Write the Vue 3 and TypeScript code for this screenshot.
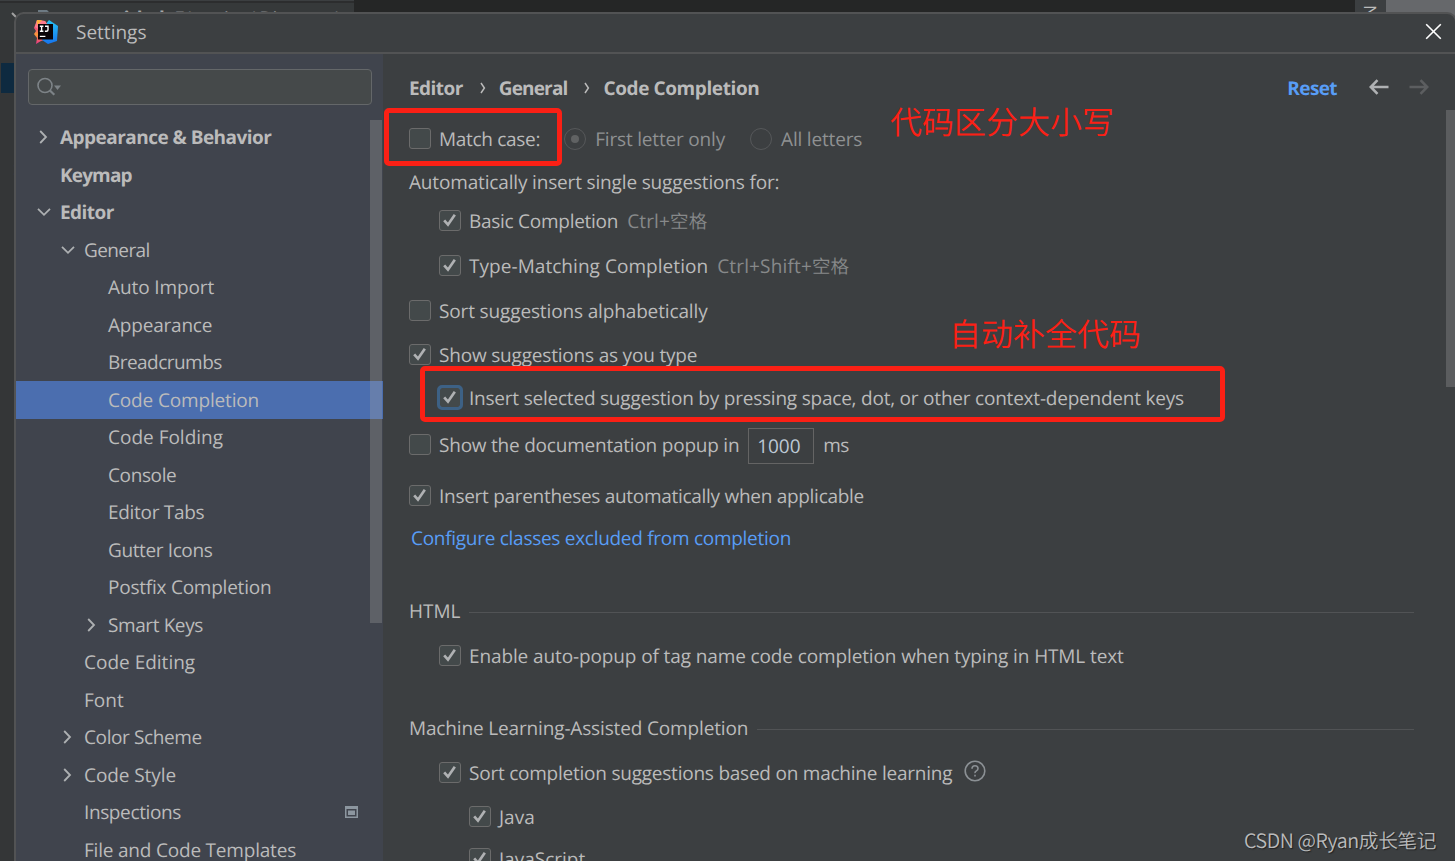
<script setup lang="ts">
interface TreeItem {
  label: string
  depth: number
  arrow?: 'open' | 'closed'
  bold?: boolean
  selected?: boolean
  badge?: boolean
}

interface OptionRow {
  kind: 'check' | 'text' | 'link' | 'section'
  label: string
  depth?: number
  checked?: boolean
  focused?: boolean
  hint?: string
  cjkHint?: string
  radios?: boolean
  delay?: string
  help?: boolean
}

const tree: TreeItem[] = [
  { label: 'Appearance & Behavior', depth: 0, arrow: 'closed', bold: true },
  { label: 'Keymap', depth: 0, bold: true },
  { label: 'Editor', depth: 0, arrow: 'open', bold: true },
  { label: 'General', depth: 1, arrow: 'open' },
  { label: 'Auto Import', depth: 2 },
  { label: 'Appearance', depth: 2 },
  { label: 'Breadcrumbs', depth: 2 },
  { label: 'Code Completion', depth: 2, selected: true },
  { label: 'Code Folding', depth: 2 },
  { label: 'Console', depth: 2 },
  { label: 'Editor Tabs', depth: 2 },
  { label: 'Gutter Icons', depth: 2 },
  { label: 'Postfix Completion', depth: 2 },
  { label: 'Smart Keys', depth: 2, arrow: 'closed' },
  { label: 'Code Editing', depth: 1 },
  { label: 'Font', depth: 1 },
  { label: 'Color Scheme', depth: 1, arrow: 'closed' },
  { label: 'Code Style', depth: 1, arrow: 'closed' },
  { label: 'Inspections', depth: 1, badge: true },
  { label: 'File and Code Templates', depth: 1 },
]

const rows: OptionRow[] = [
  { kind: 'check', label: 'Match case:', radios: true },
  { kind: 'text', label: 'Automatically insert single suggestions for:' },
  { kind: 'check', label: 'Basic Completion', depth: 1, checked: true, hint: 'Ctrl+', cjkHint: '空格' },
  { kind: 'check', label: 'Type-Matching Completion', depth: 1, checked: true, hint: 'Ctrl+Shift+', cjkHint: '空格' },
  { kind: 'check', label: 'Sort suggestions alphabetically' },
  { kind: 'check', label: 'Show suggestions as you type', checked: true },
  { kind: 'check', label: 'Insert selected suggestion by pressing space, dot, or other context-dependent keys', depth: 1, checked: true, focused: true },
  { kind: 'check', label: 'Show the documentation popup in', delay: '1000' },
  { kind: 'check', label: 'Insert parentheses automatically when applicable', checked: true },
  { kind: 'link', label: 'Configure classes excluded from completion' },
  { kind: 'section', label: 'HTML' },
  { kind: 'check', label: 'Enable auto-popup of tag name code completion when typing in HTML text', depth: 1, checked: true },
  { kind: 'section', label: 'Machine Learning-Assisted Completion' },
  { kind: 'check', label: 'Sort completion suggestions based on machine learning', depth: 1, checked: true, help: true },
  { kind: 'check', label: 'Java', depth: 2, checked: true },
  { kind: 'check', label: 'JavaScript', depth: 2, checked: true },
]
</script>

<template>
  <div class="desktop">
    <div class="ide">
      <div class="ide-project">
        <svg class="ide-arrow" width="14" height="12" viewBox="0 0 14 12"><path d="M1 2l6 6 6-6" fill="none" stroke="#a0a0a0" stroke-width="2" /></svg>
        <svg class="ide-folder" width="22" height="18" viewBox="0 0 22 18"><path d="M0 0h9l3 3h10v15H0z" fill="#6d7a83" /></svg>
        <b>untitled</b><span>E:\project\Directory\untitled</span>
      </div>
      <div class="ide-gap"></div>
      <div class="ide-tab">Notifications</div>
      <div class="ide-noise"></div>
    </div>
    <div class="ide-selection"></div>
    <div class="ide-mark">:</div>

    <div class="window">
      <header class="titlebar">
        <svg class="logo" width="26" height="26" viewBox="0 0 26 26">
          <defs>
            <linearGradient id="warm" x1="0" y1="0" x2="0" y2="1">
              <stop offset="0" stop-color="#ffa04f" /><stop offset=".35" stop-color="#f0507d" /><stop offset=".6" stop-color="#fc9a37" /><stop offset="1" stop-color="#e8318c" />
            </linearGradient>
            <linearGradient id="cool" x1="0" y1="0" x2="0" y2="1">
              <stop offset="0" stop-color="#26c3f5" /><stop offset="1" stop-color="#1674ee" />
            </linearGradient>
          </defs>
          <path d="M4 1l8 1 3 4v14l-7 2-5 3 1-6-3-4 2-3-2-3z" fill="url(#warm)" />
          <path d="M12 6l4-5 3 2 6 4-1 15-9 3-6-4z" fill="url(#cool)" />
          <path d="M4 1l8 1 2 3H5v5L2 8z" fill="#ff7b8d" />
          <path d="M4 1l5 .6L4 6z" fill="#ffb03a" />
          <rect x="5" y="5" width="15" height="15.5" fill="#0a0508" />
          <path d="M6.8 7.2h3.6M8.6 7.2v5M6.8 12.3h3.6M12 7.2h3v3.6q0 1.5-1.5 1.5h-1.6" fill="none" stroke="#fff" stroke-width="1.4" />
          <rect x="6.8" y="16.8" width="5.6" height="1.2" fill="#fff" />
        </svg>
        <span class="title">Settings</span>
        <svg class="close" width="17" height="17" viewBox="0 0 17 17"><path d="M1.2 1.2l14.6 14.6M15.8 1.2L1.2 15.8" stroke="#fff" stroke-width="1.6" /></svg>
      </header>

      <div class="body">
        <aside class="sidebar">
          <div class="search">
            <svg width="26" height="20" viewBox="0 0 26 20">
              <circle cx="8" cy="8.5" r="7" fill="none" stroke="#7d8387" stroke-width="1.6" />
              <path d="M12.7 13.2l4.6 4.6" stroke="#7d8387" stroke-width="2.2" />
              <path d="M17 8.5h7l-3.5 4.4z" fill="#7d8387" />
            </svg>
          </div>
          <div class="tree">
            <div
              v-for="item in tree"
              :key="item.label"
              class="node"
              :class="['depth-' + item.depth, { bold: item.bold, selected: item.selected }]"
            >
              <span class="arrow">
                <svg v-if="item.arrow === 'closed'" width="14" height="14" viewBox="0 0 14 14"><path d="M4.2 1L10 7l-5.8 6" /></svg>
                <svg v-if="item.arrow === 'open'" width="15" height="14" viewBox="0 0 15 14"><path d="M2 3.8l6 6 6-6" /></svg>
              </span>
              <span class="label">{{ item.label }}</span>
              <svg v-if="item.badge" class="badge" width="13" height="12" viewBox="0 0 13 12">
                <path d="M0 0h13v12H0zM1.5 3v7.5h10V3z" fill="#8c969f" fill-rule="evenodd" />
                <rect x="3" y="4.5" width="7" height="4.5" fill="#8c969f" />
              </svg>
            </div>
          </div>
          <div class="tree-thumb"></div>
        </aside>

        <main class="content">
          <div class="crumbs">
            <b class="c1">Editor</b>
            <svg width="6" height="12" viewBox="0 0 6 12"><path d="M1 1l3.4 5L1 11" /></svg>
            <b class="c2">General</b>
            <svg width="6" height="12" viewBox="0 0 6 12"><path d="M1 1l3.4 5L1 11" /></svg>
            <b class="c3">Code Completion</b>
            <b class="reset">Reset</b>
            <svg class="nav" width="20" height="16" viewBox="0 0 20 16"><path d="M19.5 8H2M8.5 1.2L1.8 8l6.7 6.8" /></svg>
            <svg class="nav forward" width="20" height="16" viewBox="0 0 20 16"><path d="M.5 8H18M11.5 1.2L18.2 8l-6.7 6.8" /></svg>
          </div>

          <div class="options">
            <div v-for="row in rows" :key="row.label" class="row" :class="[row.kind, 'indent-' + (row.depth ?? 0)]">
              <span v-if="row.kind === 'check'" class="box" :class="{ focused: row.focused }">
                <svg v-if="row.checked" width="19" height="19" viewBox="0 0 20 20"><path d="M4.4 9.8l4 4.6L15.6 4" /></svg>
              </span>
              <span class="label">{{ row.label }}</span>
              <span v-if="row.hint" class="hint">{{ row.hint }}<span class="cjk">{{ row.cjkHint }}</span></span>
              <template v-if="row.radios">
                <span class="radio on"></span><span class="muted first">First letter only</span>
                <span class="radio"></span><span class="muted all">All letters</span>
              </template>
              <template v-if="row.delay">
                <span class="field">{{ row.delay }}</span><span class="unit">ms</span>
              </template>
              <span v-if="row.kind === 'section'" class="rule"></span>
              <svg v-if="row.help" class="help" width="22" height="22" viewBox="0 0 22 22">
                <circle cx="11" cy="11" r="9.8" />
                <path d="M8 8.8q0-3 3-3t3 2.7q0 1.5-1.6 2.4T11 13.2M11 14.8v1.8" />
              </svg>
            </div>
          </div>
          <div class="content-thumb"></div>
        </main>
      </div>
    </div>

    <div class="mark mark-case"></div>
    <div class="mark mark-insert"></div>
    <div class="note note-case">代码区分大小写</div>
    <div class="note note-insert">自动补全代码</div>
    <div class="watermark">CSDN @Ryan成长笔记</div>
  </div>
</template>

<style>
html, body { margin: 0; overflow: hidden; background: #3c3f41; }
</style>

<style scoped>
* { box-sizing: border-box; }
.desktop {
  position: relative;
  width: 1455px;
  height: 861px;
  overflow: hidden;
  background: #343637;
  color: #bbbbbb;
  font-family: "Open Sans", "Noto Sans", "Noto Sans CJK SC", sans-serif;
  font-size: 19px;
  white-space: nowrap;
  text-rendering: geometricPrecision;
}
svg { display: block; flex: none; }
.ide { display: flex; height: 40px; }
.ide-project {
  display: flex;
  width: 354px;
  overflow: hidden;
  border-top: 1px solid #3c3f41;
  background: #36393a;
  box-shadow: inset 0 2px #2c2d2e;
  color: #85888a;
  line-height: 26px;
  padding-top: 4px;
}
.ide-arrow { margin: 6px 13px 0 11px; }
.ide-folder { margin-top: 5px; margin-right: 32px; }
.ide-project b { color: #a5a7a8; margin-right: 10px; letter-spacing: -.5px; }
.ide-project span { letter-spacing: -.6px; }
.ide-gap { width: 1001px; background: #252626; }
.ide-tab { width: 31px; padding-top: 5px; overflow: hidden; background: #3c3f41; writing-mode: vertical-rl; line-height: 31px; font-size: 17px; }
.ide-noise { flex: 1; background: #66686b; }
.ide-selection { position: absolute; left: 1px; top: 63px; width: 14px; height: 30px; background: #0e2a40; }
.ide-mark { position: absolute; left: 13px; top: 155px; color: #999; }
.window {
  position: absolute;
  left: 14px;
  top: 12px;
  width: 1443px;
  height: 860px;
  display: flex;
  flex-direction: column;
  overflow: hidden;
  border: 2px solid #525354;
  border-radius: 10px 10px 0 0;
  background: #3c3f41;
}
.titlebar { display: flex; align-items: center; height: 40px; padding-left: 17px; border-bottom: 2px solid #525354; flex: none; }
.logo { margin-bottom: 2px; }
.title { margin-left: 17px; margin-bottom: 2px; }
.close { margin-left: auto; margin-right: 13px; margin-bottom: 4px; }
.body { display: flex; flex: 1; }
.sidebar { position: relative; width: 367px; background: #40444d; padding-top: 15px; }
.search {
  display: flex;
  align-items: center;
  width: 344px;
  height: 36px;
  margin-left: 12px;
  padding-left: 8px;
  border: 1px solid #646769;
  border-radius: 4px;
  background: #45494a;
}
.tree { padding-top: 13.5px; letter-spacing: -.3px; }
.node { display: flex; align-items: center; height: 37.5px; padding-left: 20px; }
.depth-1 { padding-left: 44px; }
.depth-2 { padding-left: 68px; }
.node.bold { font-weight: 700; letter-spacing: -.53px; }
.node.bold:nth-child(2) { letter-spacing: -.85px; }
.node:nth-child(4) { letter-spacing: -.6px; }
.node:nth-child(5) { letter-spacing: -.1px; }
.node:nth-child(6) { letter-spacing: -.2px; }
.node:nth-child(7) { letter-spacing: -.54px; }
.node:nth-child(8) { letter-spacing: -.15px; }
.node:nth-child(9), .node:nth-child(15), .node:nth-child(16) { letter-spacing: 0; }
.node:nth-child(10), .node:nth-child(12), .node:nth-child(17), .node:nth-child(19) { letter-spacing: -.38px; }
.node:nth-child(13) { letter-spacing: -.23px; }
.node:nth-child(14) { letter-spacing: -.4px; }
.node:nth-child(18) { letter-spacing: -.08px; }
.node:nth-child(20) { letter-spacing: -.2px; }
.node.selected { background: #4b6eaf; }
.arrow { width: 24px; flex: none; }
.arrow path { fill: none; stroke: #adb0b2; stroke-width: 1.8; }
.badge { margin-left: auto; margin-right: 25px; }
.tree-thumb { position: absolute; right: 1px; top: 66px; width: 12px; height: 503px; background: rgba(166, 166, 166, .3); }
.content { position: relative; flex: 1; padding-left: 26px; }
.crumbs { display: flex; align-items: center; height: 68px; width: 1020px; margin-bottom: 2px; }
.crumbs svg path { fill: none; stroke: #bbb; stroke-width: 1.5; }
.crumbs > svg:not(.nav) { margin: 0 13px 0 17px; }
.c1 { letter-spacing: -.55px; }
.c2 { letter-spacing: -.85px; }
.c3 { letter-spacing: -.4px; }
.reset { margin-left: auto; color: #589df6; letter-spacing: -.6px; }
.crumbs .nav { margin-left: 32px; margin-bottom: 2px; }
.crumbs .forward { margin-left: 20px; }
.crumbs .nav path { stroke: #afb1b3; stroke-width: 2.6; }
.crumbs .forward path { stroke: #5c5e60; }
.options {
  display: grid;
  grid-template-rows: 43px 39px 45px 45px 44px 43px 47px 51px 42px 73px 45px 72px 45px 44px 42px 40px;
  width: 1005px;
}
.row { display: flex; align-items: center; height: 30px; }
.indent-1 { padding-left: 30px; }
.indent-2 { padding-left: 60px; }
.row:nth-child(1) .label { letter-spacing: -.3px; }
.row:nth-child(2) .label { letter-spacing: -.16px; }
.row:nth-child(3) .label { letter-spacing: -.27px; }
.row:nth-child(4) .label { letter-spacing: .05px; }
.row:nth-child(5) .label { letter-spacing: -.14px; }
.row:nth-child(6) .label { letter-spacing: -.19px; }
.row:nth-child(7) .label { letter-spacing: -.215px; }
.row:nth-child(8) .label { letter-spacing: -.22px; }
.row:nth-child(9) .label { letter-spacing: -.29px; }
.row:nth-child(10) .label { letter-spacing: -.28px; }
.row:nth-child(12) .label { letter-spacing: -.115px; }
.row:nth-child(13) .label { letter-spacing: -.15px; }
.row:nth-child(14) .label { letter-spacing: -.23px; }
.box { width: 22px; height: 21px; flex: none; margin: -1px 8px 0 0; border: 1.5px solid #6b6b6b; border-radius: 3px; background: #43494a; }
.box path { fill: none; stroke: #afb1b3; stroke-width: 2.8; }
.box.focused { border-color: #466d94; outline: 3px solid #3d6185; outline-offset: -1px; }
.hint { margin-left: 9px; color: #87898a; letter-spacing: .15px; }
.cjk { font-family: "Noto Sans CJK SC", sans-serif; font-weight: 350; font-size: 18.5px; }
.radio { position: relative; width: 22px; height: 22px; border: 1.5px solid #56585a; border-radius: 50%; }
.radio.on { margin-left: 24px; }
.radio.on::after { content: ""; position: absolute; left: 5.5px; top: 5.5px; width: 8px; height: 8px; border-radius: 50%; background: #606263; }
.muted { margin-left: 9px; color: #8f9192; letter-spacing: -.18px; }
.first { margin-right: 25px; }
.field { display: flex; align-items: center; justify-content: center; width: 66px; height: 36px; margin: 1px 9px 0; padding-right: 5px; border: 1px solid #646464; color: #bcc8d4; }
.unit { letter-spacing: -.8px; }
.link { color: #589df6; padding-left: 2px; }
.rule { flex: 1; height: 1px; margin: 3px 0 0 9px; background: #515355; }
.help { margin: -4px 0 0 12px; fill: none; stroke: #8b9094; stroke-width: 1.6; }
.content-thumb { position: absolute; left: 1063px; top: 56px; width: 12px; height: 277px; background: #5b5d5f; }
.mark { position: absolute; border: 5px solid #fb2015; border-radius: 5px; }
.mark-case { left: 384px; top: 108px; width: 178px; height: 58px; }
.mark-insert { left: 420px; top: 366px; width: 805px; height: 56px; }
.note { position: absolute; color: #fb2015; font: 350 32px/40px "Noto Sans CJK SC", sans-serif; }
.note-case { left: 890px; top: 101px; }
.note-insert { left: 949px; top: 313px; }
.watermark { position: absolute; left: 1244px; top: 826px; color: #b9babb; font: 350 19.7px/27px "Noto Sans CJK SC", sans-serif; letter-spacing: -.4px; text-shadow: 1px 1px 1px #222; }
</style>
